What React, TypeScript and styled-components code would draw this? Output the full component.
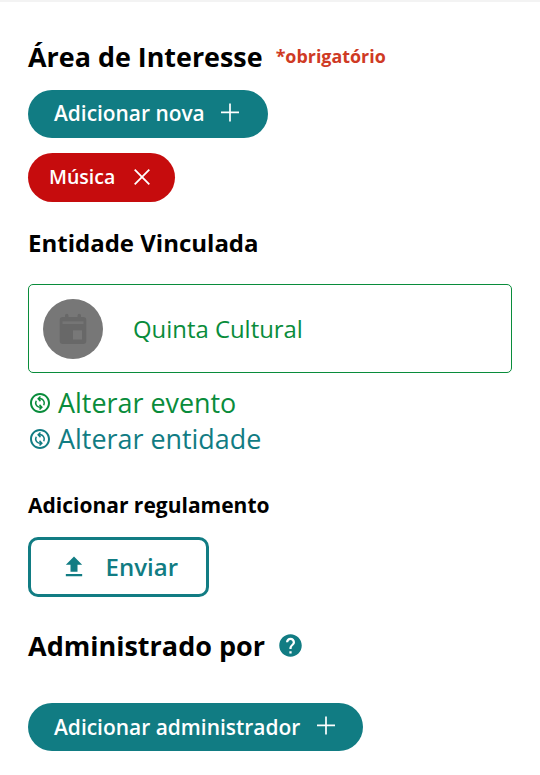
import React from "react";
import styled, { createGlobalStyle } from "styled-components";
import { MdOutlineChangeCircle, MdUpload, MdHelp } from "react-icons/md";

const teal = "#117c83";
const green = "#098c3b";

const GlobalStyle = createGlobalStyle`
  * { box-sizing: border-box; }
  body { margin: 0; background: #fff; color: #000; font-family: "Open Sans", "Noto Sans", sans-serif; }
  button { font-family: inherit; cursor: pointer; }
  svg { display: block; flex: none; }
`;

const Page = styled.main`
  display: flex;
  flex-direction: column;
  align-items: flex-start;
  height: 775px;
  padding: 37px 28px 0;
  border-top: 2px solid #f3f3f3;
  overflow: hidden;
`;

const Heading = styled.h2<{ $size: number; $line: number; $top?: number }>`
  margin: ${(p) => p.$top ?? 0}px 0 0;
  font-weight: 700;
  font-size: ${(p) => p.$size}px;
  line-height: ${(p) => p.$line}px;
  white-space: nowrap;
`;

const TitleRow = styled.div<{ $gap: number; $top?: number }>`
  display: flex;
  align-items: center;
  gap: ${(p) => p.$gap}px;
  height: 36px;
  margin-top: ${(p) => p.$top ?? 0}px;
`;

const HelpIcon = styled(MdHelp)`
  margin-bottom: 2px;
  color: ${teal};
`;

const Required = styled.span`
  font-size: 17.9px;
  font-weight: 700;
  line-height: 34px;
  padding-bottom: 2px;
  color: #cf3a24;
`;

const Pill = styled.button<{ $width: number; $top: number }>`
  display: flex;
  align-items: center;
  justify-content: space-between;
  width: ${(p) => p.$width}px;
  height: 48px;
  margin-top: ${(p) => p.$top}px;
  padding: 0 28px 2px 26px;
  border: 0;
  border-radius: 24px;
  background: ${teal};
  color: #fff;
  font-size: 20.9px;
  font-weight: 600;
  white-space: nowrap;
`;

const WidePill = styled(Pill)`
  padding: 0 27px 0 26px;
  font-size: 20.95px;

  svg {
    margin-bottom: 2px;
  }
`;

const Tag = styled(Pill)`
  height: 49px;
  padding: 0 24px 1px 21px;
  border-radius: 25px;
  background: #c60c0d;
  font-size: 19.5px;
`;

const TagLabel = styled.span`
  padding-bottom: 2px;
`;

const EntityCard = styled.section`
  display: flex;
  align-items: center;
  gap: 30px;
  width: 484px;
  height: 89px;
  margin-top: 23px;
  padding: 0 14px;
  border: 1px solid ${green};
  border-radius: 5px;
  color: ${green};
  font-size: 23.9px;
`;

const Avatar = styled.div`
  display: grid;
  place-items: center;
  width: 60px;
  height: 60px;
  border-radius: 50%;
  background: #777;
`;

const Links = styled.nav`
  display: flex;
  flex-direction: column;
  margin-top: 12px;
`;

const ChangeLink = styled.a<{ $color: string }>`
  display: flex;
  align-items: center;
  gap: 6px;
  height: 36px;
  color: ${(p) => p.$color};
  font-size: 26.9px;
  line-height: 36px;
  white-space: nowrap;
`;

const UploadButton = styled.button`
  display: flex;
  align-items: center;
  gap: 18px;
  width: 181px;
  height: 60px;
  margin-top: 17px;
  padding: 0 0 1px 28.6px;
  border: 3px solid ${teal};
  border-radius: 10px;
  background: #fff;
  color: ${teal};
  font-size: 24px;
  font-weight: 600;
`;

const PlusIcon = () => (
  <svg width="20" height="20" viewBox="0 0 20 20" fill="none" stroke="currentColor" strokeWidth="1.7">
    <path d="M10 .4v18M1 9.400h18" />
  </svg>
);

const CloseIcon = () => (
  <svg width="18" height="18" viewBox="0 0 18 18" fill="none" stroke="currentColor" strokeWidth="1.8">
    <path d="M1.7 1.7l14.6 14.6M16.3 1.7L1.7 16.3" />
  </svg>
);

const CalendarIcon = () => (
  <svg width="28" height="32" viewBox="0 0 28 32">
    <path
      fill="#686868"
      d="M6 4V2.5a1.5 1.5 0 0 1 3.5 0V4h9V2.5a1.5 1.5 0 0 1 3.5 0V4h2.3a3 3 0 0 1 3 3v21a3 3 0 0 1-3 3H3.7a3 3 0 0 1-3-3V7a3 3 0 0 1 3-3z"
    />
    <path fill="#757575" d="M3.5 8.3h21v2.7h-21z" />
    <path fill="#787878" d="M14 17.3h9v9.2h-9z" />
  </svg>
);

export default function App() {
  return (
    <>
      <GlobalStyle />
      <Page>
        <TitleRow $gap={13}>
          <Heading $size={26.9} $line={36}>Área de Interesse</Heading>
          <Required>*obrigatório</Required>
        </TitleRow>
        <Pill $width={240} $top={15}>
          Adicionar nova
          <PlusIcon />
        </Pill>
        <Tag $width={147} $top={15}>
          <TagLabel>Música</TagLabel>
          <CloseIcon />
        </Tag>
        <Heading $size={24} $line={36} $top={23}>Entidade Vinculada</Heading>
        <EntityCard>
          <Avatar>
            <CalendarIcon />
          </Avatar>
          <span>Quinta Cultural</span>
        </EntityCard>
        <Links>
          <ChangeLink $color={green}>
            <MdOutlineChangeCircle size={24} />
            Alterar evento
          </ChangeLink>
          <ChangeLink $color={teal}>
            <MdOutlineChangeCircle size={24} />
            Alterar entidade
          </ChangeLink>
        </Links>
        <Heading $size={21} $line={30} $top={33}>Adicionar regulamento</Heading>
        <UploadButton>
          <MdUpload size={28} />
          Enviar
        </UploadButton>
        <TitleRow $gap={12} $top={31}>
          <Heading $size={27} $line={36}>Administrado por</Heading>
          <HelpIcon size={27} />
        </TitleRow>
        <WidePill $width={335} $top={39}>
          Adicionar administrador
          <PlusIcon />
        </WidePill>
      </Page>
    </>
  );
}
